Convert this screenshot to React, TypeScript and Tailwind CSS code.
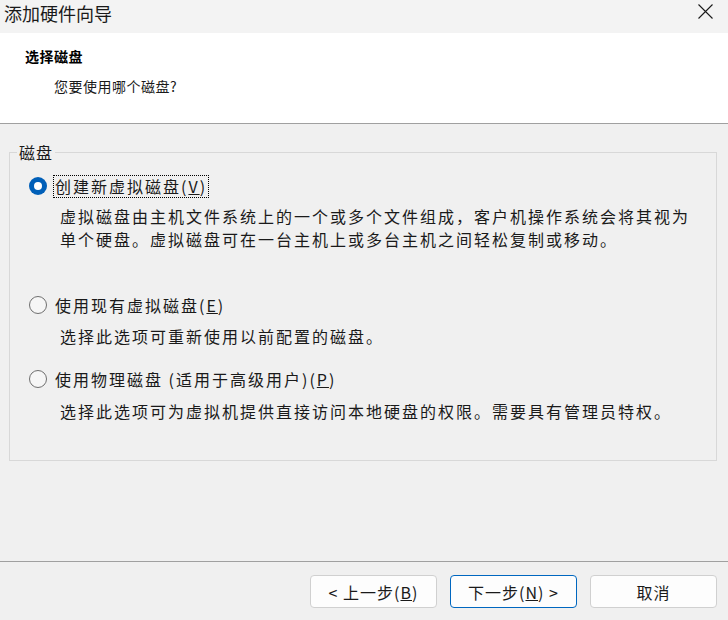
const font = { fontFamily: '"Noto Sans CJK SC", "Noto Sans", sans-serif' }

function Radio({ checked }: { checked?: boolean }) {
  if (checked) {
    return (
      <span className="flex h-[18px] w-[18px] shrink-0 items-center justify-center rounded-full bg-[#005fb8]">
        <span className="h-[8px] w-[8px] rounded-full bg-white" />
      </span>
    )
  }
  return <span className="h-[18px] w-[18px] shrink-0 rounded-full border border-[#6f6f6f] bg-[#f6f6f6]" />
}

function Option({ label, checked }: { label: React.ReactNode; checked?: boolean }) {
  return (
    <div className="flex h-[24px] items-center pl-[19px]">
      <Radio checked={checked} />
      <span
        className={
          'ml-[6px] flex h-[23px] items-center px-[1px] text-[16px] tracking-[2px] text-[#1a1a1a] ' +
          (checked ? 'border border-dotted border-black' : 'border border-transparent')
        }
      >
        {label}
      </span>
    </div>
  )
}

function Desc({ children, className = '' }: { children: React.ReactNode; className?: string }) {
  return (
    <p className={'pl-[50px] text-[16px] leading-[23px] tracking-[2px] whitespace-nowrap text-[#1a1a1a] ' + className}>
      {children}
    </p>
  )
}

export default function App() {
  return (
    <div className="flex h-[620px] w-[728px] flex-col overflow-hidden bg-[#f0f0f0]" style={font}>
      {/* title bar */}
      <div className="flex h-[33px] items-start justify-between bg-[#f3f3f3]">
        <span className="mt-[1px] pl-[4px] text-[18px] leading-[25px] text-[#1a1a1a]">添加硬件向导</span>
        <svg className="mr-[15px] mt-[4px]" width="15" height="15" viewBox="0 0 15 15" fill="none">
          <path d="M0.5 0.5 L14.5 14.5 M14.5 0.5 L0.5 14.5" stroke="#1a1a1a" strokeWidth="1.1" />
        </svg>
      </div>

      {/* header */}
      <div className="h-[91px] border-b border-[#a0a0a0] bg-white">
        <div className="pl-[25px] pt-[13px] text-[14px] font-bold leading-[20px] tracking-[0.5px] text-black">选择磁盘</div>
        <div className="pl-[54px] pt-[10px] text-[14px] leading-[20px] tracking-[0.5px] text-[#1a1a1a]">您要使用哪个磁盘?</div>
      </div>

      {/* body */}
      <div className="flex-1 pl-[9px] pr-[11px] pt-[17px]">
        <fieldset className="m-0 border border-[#d8d8d8] p-0">
          <legend className="ml-[7px] px-[2px] text-[16px] leading-[22px] tracking-[1px] text-[#1a1a1a]">磁盘</legend>
          <div className="pb-[37px] pt-[11px]">
            <Option checked label={<>创建新虚拟磁盘(<u>V</u>)</>} />
            <Desc className="mt-[7px]">
              虚拟磁盘由主机文件系统上的一个或多个文件组成，客户机操作系统会将其视为
              <br />
              单个硬盘。虚拟磁盘可在一台主机上或多台主机之间轻松复制或移动。
            </Desc>

            <div className="mt-[42px]">
              <Option label={<>使用现有虚拟磁盘(<u>E</u>)</>} />
            </div>
            <Desc className="mt-[8px]">选择此选项可重新使用以前配置的磁盘。</Desc>

            <div className="mt-[19px]">
              <Option label={<>使用物理磁盘 (适用于高级用户)(<u>P</u>)</>} />
            </div>
            <Desc className="mt-[9px]">选择此选项可为虚拟机提供直接访问本地硬盘的权限。需要具有管理员特权。</Desc>
          </div>
        </fieldset>
      </div>

      {/* footer */}
      <div className="flex h-[59px] justify-end gap-[13px] border-t border-[#a0a0a0] pr-[11px] pt-[13px]">
        <button className="flex h-[33px] w-[127px] items-center justify-center rounded-[4px] border border-[#d0d0d0] bg-[#fdfdfd] text-[16px] tracking-[1px] text-[#1a1a1a]">
          &lt; 上一步(<u>B</u>)
        </button>
        <button className="flex h-[33px] w-[127px] items-center justify-center rounded-[4px] border border-[#0067c0] bg-[#fdfdfd] text-[16px] tracking-[1px] text-[#1a1a1a]">
          下一步(<u>N</u>) &gt;
        </button>
        <button className="flex h-[33px] w-[127px] items-center justify-center rounded-[4px] border border-[#d0d0d0] bg-[#fdfdfd] text-[16px] tracking-[1px] text-[#1a1a1a]">
          取消
        </button>
      </div>
    </div>
  )
}
